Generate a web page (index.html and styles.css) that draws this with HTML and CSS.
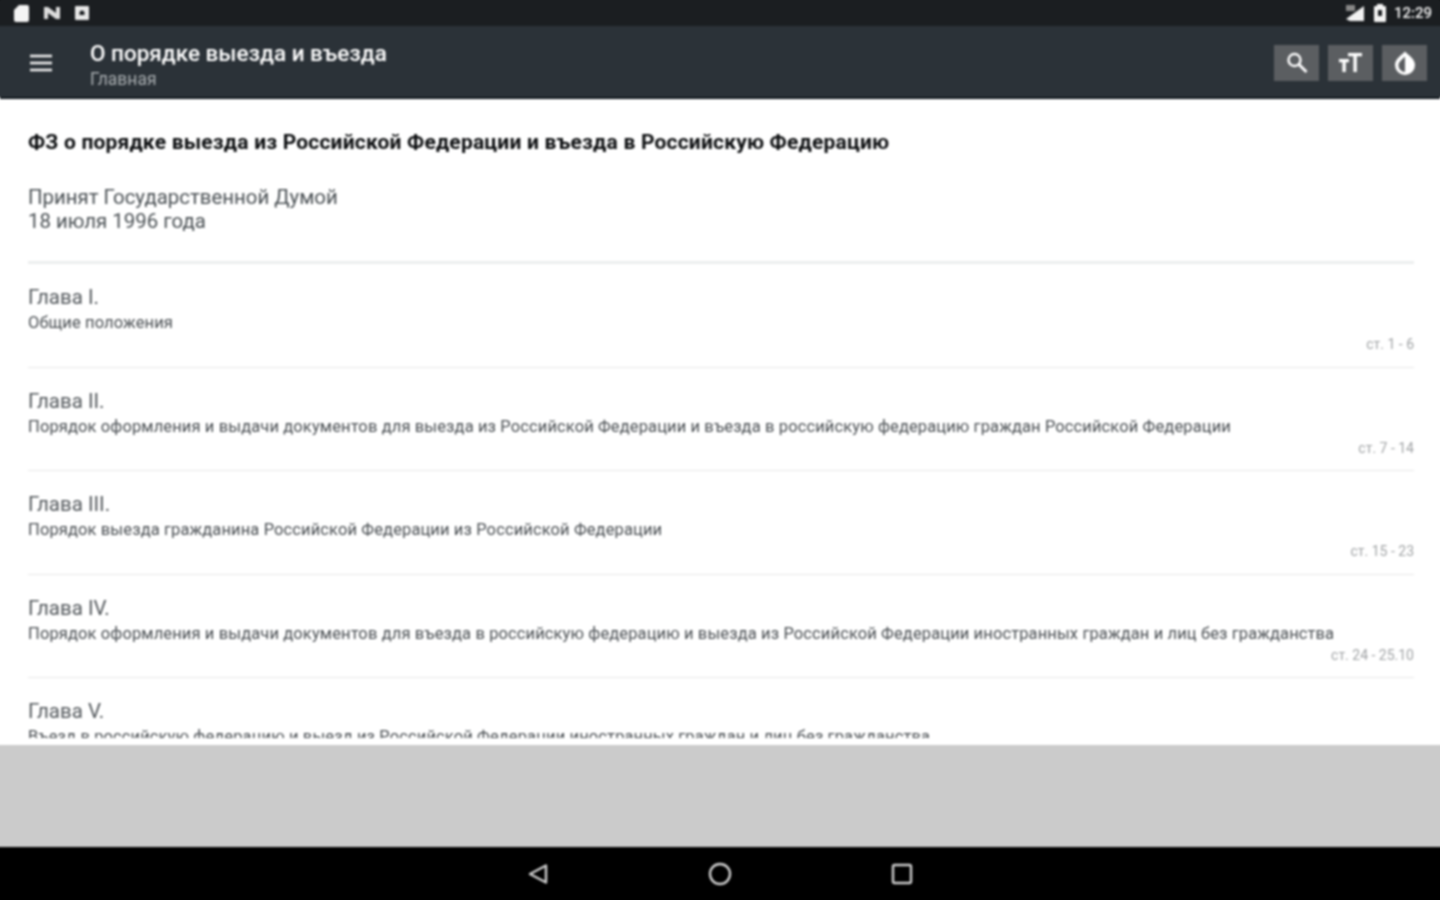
FILE: index.html
```html
<!DOCTYPE html>
<html lang="ru">
<head>
  <meta charset="UTF-8">
  <meta name="viewport" content="width=device-width, initial-scale=1.0">
  <title>О порядке выезда и въезда</title>
  <link rel="stylesheet" href="styles.css">
</head>
<body>
  <div class="screen">
    <div class="status-bar">
      <div class="status-left">
        <svg width="17" height="19" viewBox="0 0 17 19"><path d="M6 1h8a2 2 0 0 1 2 2v13a2 2 0 0 1-2 2H3a2 2 0 0 1-2-2V6z" fill="#f4f4f4"/></svg>
        <svg width="20" height="18" viewBox="0 0 20 18"><path d="M2 3h4l8 6V3h4v12h-4L6 9v6H2z" fill="#ddd"/></svg>
        <svg width="16" height="16" viewBox="0 0 16 16"><path fill-rule="evenodd" d="M2 1h12a1 1 0 0 1 1 1v12a1 1 0 0 1-1 1H2a1 1 0 0 1-1-1V2a1 1 0 0 1 1-1zm6 4.500a2.500 2.500 0 0 0-2.500 2.500v2h5V8A2.500 2.500 0 0 0 8 5.500z" fill="#e8e8e8"/></svg>
      </div>
      <div class="status-right">
        <svg width="22" height="18" viewBox="0 0 22 18"><path d="M2 15L20 2v15H6z" fill="#f2f2f2"/><path d="M2 1h9v6H2z" fill="#888"/></svg>
        <svg width="14" height="20" viewBox="0 0 14 20"><path fill-rule="evenodd" d="M4 1h6v2h2a1 1 0 0 1 1 1v14a1 1 0 0 1-1 1H2a1 1 0 0 1-1-1V4a1 1 0 0 1 1-1h2zm1 6v6h4V7z" fill="#f4f4f4"/></svg>
        <span class="clock">12:29</span>
      </div>
    </div>

    <header class="toolbar">
      <button class="menu-btn" aria-label="Меню">
        <svg width="22" height="18" viewBox="0 0 22 18"><path d="M0 2h22M0 9h22M0 16h22" stroke="#f2f2f2" stroke-width="2.600"/></svg>
      </button>
      <div class="toolbar-text">
        <div class="toolbar-title">О порядке выезда и въезда</div>
        <div class="toolbar-sub">Главная</div>
      </div>
      <div class="toolbar-actions">
        <button class="action-btn" aria-label="Поиск">
          <svg width="24" height="24" viewBox="0 0 24 24"><circle cx="9.500" cy="9" r="6" fill="none" stroke="#fff" stroke-width="2.400"/><path d="M14 13.500l7.500 7.500" stroke="#fff" stroke-width="2.800"/></svg>
        </button>
        <button class="action-btn" aria-label="Размер текста">
          <svg width="26" height="24" viewBox="0 0 26 24"><path d="M10 2h14v3.200h-5.200V21h-3.400V5.200H10zM1 8h10v3.200H7.800V21H4.400v-9.800H1z" fill="#fff"/></svg>
        </button>
        <button class="action-btn" aria-label="Контраст">
          <svg width="26" height="26" viewBox="0 0 26 26"><path fill-rule="evenodd" d="M13 1.500c3 3.500 10 7 10 13.500a10 10 0 0 1-20 0C3 8.500 10 5 13 1.500zm0 5C10.500 9.500 6.500 11.500 6.500 15.500A6.500 6.500 0 0 0 13 22z" fill="#fff"/></svg>
        </button>
      </div>
    </header>

    <main class="content">
      <div class="doc">
        <h1 class="doc-title">ФЗ о порядке выезда из Российской Федерации и въезда в Российскую Федерацию</h1>
        <p class="doc-meta">Принят Государственной Думой<br>18 июля 1996 года</p>
        <div class="doc-rule"></div>

        <div class="chapter">
          <div class="chapter-name">Глава I.</div>
          <div class="chapter-desc">Общие положения</div>
          <div class="chapter-range">ст. 1 - 6</div>
        </div>
        <div class="chapter">
          <div class="chapter-name">Глава II.</div>
          <div class="chapter-desc">Порядок оформления и выдачи документов для выезда из Российской Федерации и въезда в российскую федерацию граждан Российской Федерации</div>
          <div class="chapter-range">ст. 7 - 14</div>
        </div>
        <div class="chapter">
          <div class="chapter-name">Глава III.</div>
          <div class="chapter-desc">Порядок выезда гражданина Российской Федерации из Российской Федерации</div>
          <div class="chapter-range">ст. 15 - 23</div>
        </div>
        <div class="chapter">
          <div class="chapter-name">Глава IV.</div>
          <div class="chapter-desc">Порядок оформления и выдачи документов для въезда в российскую федерацию и выезда из Российской Федерации иностранных граждан и лиц без гражданства</div>
          <div class="chapter-range">ст. 24 - 25.10</div>
        </div>
        <div class="chapter">
          <div class="chapter-name">Глава V.</div>
          <div class="chapter-desc">Въезд в российскую федерацию и выезд из Российской Федерации иностранных граждан и лиц без гражданства</div>
        </div>
      </div>
    </main>

    <div class="empty-panel"></div>

    <nav class="nav-bar">
      <svg width="24" height="24" viewBox="0 0 24 24"><path d="M20 3.500v17L4 12z" fill="none" stroke="#cfcfcf" stroke-width="2.400" stroke-linejoin="round"/></svg>
      <svg width="24" height="24" viewBox="0 0 24 24"><circle cx="12" cy="12" r="10" fill="none" stroke="#cfcfcf" stroke-width="2.400"/></svg>
      <svg width="24" height="24" viewBox="0 0 24 24"><rect x="3" y="3" width="18" height="18" rx="1.500" fill="none" stroke="#cfcfcf" stroke-width="2.400"/></svg>
    </nav>
  </div>
</body>
</html>
```

FILE: styles.css
```css
* {
  box-sizing: border-box;
}
html, body {
  margin: 0;
  padding: 0;
  height: 900px;
  overflow: hidden;
  background: #000;
}
.screen {
  width: 1440px;
  height: 900px;
  display: flex;
  flex-direction: column;
  font-family: Roboto, "Noto Sans", sans-serif;
  filter: blur(0.8px);
}
/* side shadows keep the blur from fading at the window edges */
.status-bar {
  height: 26px;
  flex: none;
  display: flex;
  justify-content: space-between;
  align-items: center;
  padding: 0 8px 0 13px;
  background: #1b1e21;
  box-shadow: -6px 0 #1b1e21, 6px 0 #1b1e21, 0 -6px #1b1e21;
}
.status-left, .status-right {
  display: flex;
  align-items: center;
}
.status-left {
  gap: 12px;
}
.status-right {
  gap: 7px;
}
.clock {
  color: #f4f4f4;
  font-size: 15px;
  font-weight: 500;
}
.toolbar {
  height: 71px;
  flex: none;
  display: flex;
  align-items: center;
  background: #2b3238;
  box-shadow: -6px 0 #2b3238, 6px 0 #2b3238;
  padding: 2px 13px 0 0;
}
.menu-btn, .action-btn {
  border: 0;
  padding: 0;
  display: flex;
  align-items: center;
  justify-content: center;
}
.menu-btn {
  width: 90px;
  padding-right: 8px;
  background: none;
}
.toolbar-text {
  flex: 1;
  padding-top: 2px;
}
.toolbar-title {
  color: #fff;
  font-size: 22.500px;
  font-weight: 500;
  line-height: 30px;
}
.toolbar-sub {
  margin-top: 1px;
  color: #a8adb0;
  font-size: 17.500px;
  line-height: 21px;
}
.toolbar-actions {
  display: flex;
  gap: 9px;
}
.action-btn {
  width: 45px;
  height: 36px;
  background: #5b5e61;
}
.content {
  height: 648px;
  flex: none;
  background: #fff;
  box-shadow: -6px 0 #fff, 6px 0 #fff;
  border-top: 2px solid #11181d;
  padding: 0 26px 7px 28px;
}
.doc {
  height: 100%;
  overflow: hidden;
}
.doc-title {
  margin: 28px 0 0;
  color: #0c0e10;
  font-size: 21px;
  font-weight: 700;
  letter-spacing: 0.2px;
  line-height: 30px;
}
.doc-meta {
  margin: 29px 0 0;
  color: #4a5054;
  font-size: 20.400px;
  line-height: 23.500px;
}
.doc-rule {
  height: 3px;
  margin-top: 28px;
  background: #eceeee;
}
.chapter {
  height: 103.500px;
  padding-top: 19px;
  border-bottom: 1px solid #e8e8e8;
}
.chapter-name {
  color: #53585c;
  font-size: 20.500px;
  line-height: 29px;
}
.chapter-desc {
  color: #4a4f53;
  font-size: 16.500px;
  letter-spacing: 0.115px;
  line-height: 21px;
}
.chapter-range {
  margin-top: 1px;
  color: #a0a3a5;
  font-size: 14px;
  line-height: 21px;
  text-align: right;
}
.empty-panel {
  height: 102px;
  flex: none;
  background: #cbcbcb;
  box-shadow: -6px 0 #cbcbcb, 6px 0 #cbcbcb;
}
.nav-bar {
  height: 53px;
  flex: none;
  display: flex;
  justify-content: center;
  align-items: center;
  gap: 158px;
  background: #000;
}
```
